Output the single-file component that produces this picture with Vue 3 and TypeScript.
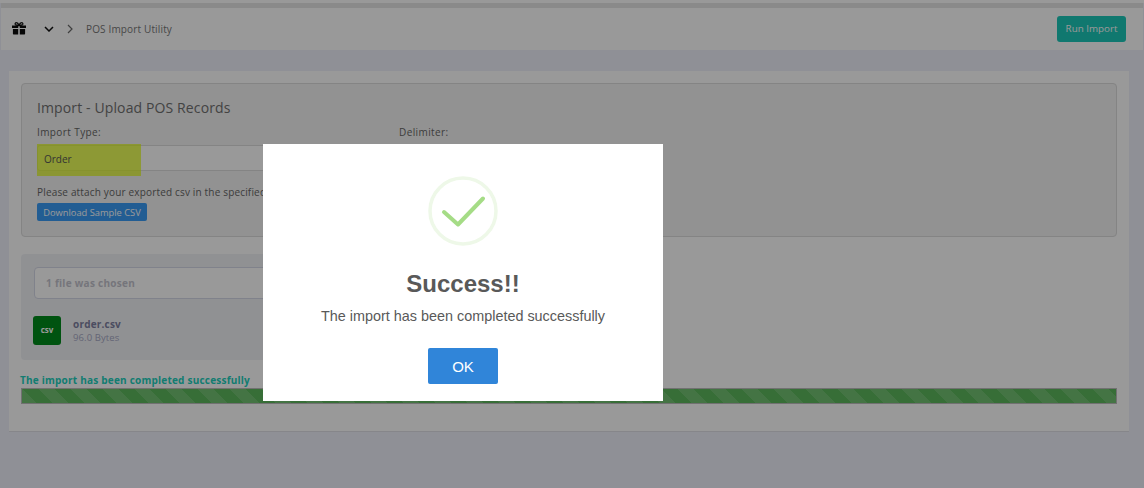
<script setup lang="ts">
const title = "The import has been completed successfully";
</script>

<template>
  <div class="page">
    <div class="strip"></div>
    <header class="topbar">
      <div class="crumbs">
        <svg class="gift" viewBox="0 0 14 13" width="14" height="13">
          <path d="M0 3.500h6.200v2.600H0zM7.800 3.500H14v2.600H7.800zM.9 7h5.300v5.500H1.600a.7.7 0 0 1-.7-.7zM7.800 7h5.300v4.800a.7.7 0 0 1-.7.7H7.800z" fill="#0d0d0d" />
          <path d="M7 3.400C5.800 3.400 3.600 3.300 3.200 2.200 2.900 1.200 3.600.6 4.400.7 5.600.8 6.500 2 7 3.400c.5-1.400 1.400-2.600 2.600-2.700.8-.1 1.500.5 1.200 1.500C10.400 3.300 8.200 3.400 7 3.400z" fill="none" stroke="#0d0d0d" stroke-width="1.200" />
        </svg>
        <svg class="chev" viewBox="0 0 10 6" width="10" height="6">
          <path d="M1 1l4 4 4-4" fill="none" stroke="#111" stroke-width="1.500" />
        </svg>
        <svg class="sep" viewBox="0 0 6 10" width="6" height="10">
          <path d="M1 1l4 4-4 4" fill="none" stroke="#6a6a6a" stroke-width="1.200" />
        </svg>
        <span class="crumb-text">POS Import Utility</span>
      </div>
      <button class="run">Run Import</button>
    </header>

    <main class="main">
      <div class="card">
        <section class="form-box">
          <h2 class="form-title">Import - Upload POS Records</h2>
          <div class="fields">
            <div class="field">
              <label>Import Type:</label>
              <div class="select"><span class="select-text">Order</span><span class="mark"></span></div>
            </div>
            <div class="field">
              <label>Delimiter:</label>
            </div>
          </div>
          <p class="hint">Please attach your exported csv in the specified format</p>
          <button class="sample">Download Sample CSV</button>
        </section>

        <section class="upload">
          <div class="chosen">1 file was chosen</div>
          <div class="file">
            <div class="csv">csv</div>
            <div>
              <div class="file-name">order.csv</div>
              <div class="file-size">96.0 Bytes</div>
            </div>
          </div>
        </section>

        <div class="done">{{ title }}</div>
        <div class="progress"></div>
      </div>
    </main>

    <div class="overlay">
      <div class="modal">
        <svg class="tick" viewBox="0 0 70 70" width="70" height="70">
          <circle cx="35" cy="35" r="33" fill="none" stroke="#eef8e8" stroke-width="3.500" />
          <path d="M16 36l14 12.500 25-26" fill="none" stroke="#a5dc86" stroke-width="4" stroke-linecap="round" stroke-linejoin="round" />
        </svg>
        <h1>Success!!</h1>
        <p>{{ title }}</p>
        <button class="ok">OK</button>
      </div>
    </div>
  </div>
</template>

<style scoped>
.page {
  position: relative;
  width: 1144px;
  height: 488px;
  overflow: hidden;
  box-sizing: border-box;
  padding: 3px 1px 0;
  background: #eef0fa;
  box-shadow: inset 0 3px 0 #fff;
  font-family: "Open Sans", sans-serif;
  color: #666;
}

.strip {
  height: 5px;
  background: #e6e6e6;
}

.topbar {
  height: 42px;
  display: flex;
  align-items: center;
  justify-content: space-between;
  background: #fff;
  padding: 0 17px 0 11px;
}

.crumbs {
  display: flex;
  align-items: center;
}

.gift {
  margin-top: -2px;
}

.chev {
  margin-left: 18px;
}

.sep {
  margin-left: 13px;
}

.crumb-text {
  margin-left: 13px;
  font-size: 10px;
  letter-spacing: 0.15px;
  color: #777;
}

.run {
  width: 69px;
  height: 26px;
  margin-top: -1px;
  padding: 0;
  border: none;
  border-radius: 3px;
  background: #1cc8b9;
  color: #fff;
  font-family: inherit;
  font-size: 9.800px;
}

.main {
  padding: 21px 14px 0 8px;
}

.card {
  height: 361px;
  box-sizing: border-box;
  padding: 12px 12px 0;
  background: #fff;
  border-bottom: 1px solid #e0e0e6;
}

.form-box {
  height: 154px;
  box-sizing: border-box;
  padding: 14px 15px 0;
  background: #f3f3f3;
  border: 1px solid #dcdcdc;
  border-radius: 4px;
}

.form-title {
  margin: 0;
  font-size: 14px;
  line-height: 20px;
  font-weight: 400;
  letter-spacing: 0.12px;
  color: #707070;
}

.fields {
  display: flex;
  margin-top: 7px;
}

.field {
  width: 362px;
}

.field label {
  display: block;
  font-size: 10px;
  line-height: 14px;
  letter-spacing: 0.4px;
  color: #666;
}

.select {
  position: relative;
  width: 340px;
  height: 26px;
  margin-top: 6px;
  box-sizing: border-box;
  padding-left: 6px;
  background: #fff;
  border: 1px solid #dcdcdc;
  border-radius: 3px;
  font-size: 10px;
  line-height: 26px;
  color: #333;
}

.select-text {
  position: relative;
  z-index: 1;
}

.mark {
  position: absolute;
  left: -1px;
  top: -2px;
  width: 104px;
  height: 32px;
  background: rgba(226, 255, 0, 0.65);
}

.hint {
  margin: 14px 0 0;
  font-size: 10px;
  line-height: 14px;
  letter-spacing: 0.17px;
  color: #666;
}

.sample {
  display: block;
  width: 110px;
  height: 18px;
  margin-top: 4px;
  padding: 0;
  border: none;
  border-radius: 2px;
  background: #3a9cf5;
  color: #fff;
  font-family: inherit;
  font-size: 9.300px;
}

.upload {
  width: 620px;
  height: 106px;
  margin-top: 17px;
  box-sizing: border-box;
  padding: 13px 12px 0;
  background: #f1f2f6;
  border-radius: 4px;
}

.chosen {
  width: 500px;
  height: 32px;
  margin-left: 1px;
  box-sizing: border-box;
  padding-left: 11px;
  border: 1px solid #d5d9e8;
  border-radius: 4px;
  background: #fff;
  font-size: 10px;
  font-weight: 700;
  letter-spacing: 0.28px;
  line-height: 30px;
  color: #c4c4ce;
}

.file {
  display: flex;
  align-items: center;
  gap: 12px;
  margin-top: 17px;
}

.csv {
  width: 28px;
  height: 29px;
  border-radius: 3px;
  background: #008a1c;
  color: #fff;
  font-size: 8px;
  font-weight: 700;
  line-height: 28px;
  text-align: center;
}

.file-name {
  font-size: 10px;
  font-weight: 700;
  letter-spacing: 0.2px;
  line-height: 14px;
  color: #7d80a0;
}

.file-size {
  font-size: 9.500px;
  letter-spacing: 0.1px;
  line-height: 14px;
  color: #a6a9c4;
}

.done {
  margin: 13px 0 0 -1px;
  font-size: 10px;
  font-weight: 700;
  letter-spacing: 0.22px;
  line-height: 15px;
  color: #20cfbc;
}

.progress {
  height: 16px;
  box-sizing: border-box;
  border: 1px solid #bdbdbd;
  background: repeating-linear-gradient(45deg, #72c172 0 10px, #5cb85c 10px 21.300px, #72c172 21.300px 22.600px);
}

.overlay {
  position: absolute;
  inset: 0;
  background: rgba(0, 0, 0, 0.4);
}

.modal {
  position: absolute;
  left: 263px;
  top: 144px;
  width: 400px;
  height: 257px;
  box-sizing: border-box;
  padding-top: 32px;
  background: #fff;
  text-align: center;
  font-family: "Liberation Sans", Arial, sans-serif;
  color: #595959;
}

.tick {
  display: block;
  margin: 0 auto;
}

.modal h1 {
  margin: 24px 0 0;
  font-size: 24px;
  line-height: 28px;
  font-weight: 700;
}

.modal p {
  margin: 8px 0 0;
  font-size: 14.400px;
  line-height: 20px;
}

.ok {
  width: 70px;
  height: 36px;
  margin-top: 22px;
  padding: 0;
  border: none;
  border-radius: 2px;
  background: #3085d9;
  color: #fff;
  font-family: inherit;
  font-size: 15px;
}
</style>
